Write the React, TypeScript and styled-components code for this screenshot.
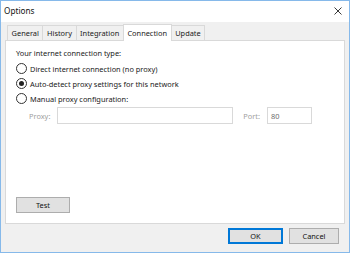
import React from "react";
import styled, { createGlobalStyle } from "styled-components";

const Global = createGlobalStyle`
  html, body { margin: 0; padding: 0; background: #ffffff; }
  * { box-sizing: border-box; }
`;

const Window = styled.div`
  width: 350px;
  height: 253px;
  border: 1px solid #86b9ea;
  display: flex;
  flex-direction: column;
  font-family: "Noto Sans", "Open Sans", sans-serif;
  font-size: 7.4px;
  color: #1a1a1a;
  overflow: hidden;
`;

const TitleBar = styled.div`
  height: 21px;
  background: #ffffff;
  display: flex;
  align-items: center;
  justify-content: space-between;
  padding: 0 7px 2px 3px;
`;

const Title = styled.span`
  font-size: 8.2px;
  color: #111;
`;

const Body = styled.div`
  flex: 1;
  background: #f0f0f0;
  display: flex;
  flex-direction: column;
  padding: 0 4px 0 4px;
`;

const TabRow = styled.div`
  height: 18px;
  display: flex;
  align-items: flex-end;
  padding-left: 2px;
`;

const Tab = styled.div<{ $active?: boolean }>`
  height: ${(p) => (p.$active ? "17px" : "15px")};
  padding: 0 3.6px;
  display: flex;
  align-items: center;
  border: 1px solid #d9d9d9;
  border-bottom: none;
  margin-left: -1px;
  background: ${(p) => (p.$active ? "#ffffff" : "#f0f0f0")};
  margin-bottom: ${(p) => (p.$active ? "-1px" : "0")};
  position: relative;
  z-index: ${(p) => (p.$active ? 1 : 0)};
  &:first-child { margin-left: 0; }
`;

const Panel = styled.div`
  height: 184px;
  background: #ffffff;
  border: 1px solid #d9d9d9;
  padding: 7px 10px 10px 10px;
  display: flex;
  flex-direction: column;
`;

const Heading = styled.div`
  height: 11px;
  line-height: 11px;
  margin-bottom: 3px;
`;

const RadioRow = styled.label`
  height: 13px;
  display: flex;
  align-items: center;
  gap: 3px;
  margin-bottom: 2px;
`;

const RadioCircle = styled.span<{ $checked?: boolean }>`
  width: 11px;
  height: 11px;
  border-radius: 50%;
  border: 1px solid #333;
  background: #fff;
  display: flex;
  align-items: center;
  justify-content: center;
  &::after {
    content: "";
    width: 5px;
    height: 5px;
    border-radius: 50%;
    background: ${(p) => (p.$checked ? "#222" : "transparent")};
  }
`;

const ProxyRow = styled.div`
  display: flex;
  align-items: center;
  padding-left: 13px;
  margin-top: 0;
`;

const DimLabel = styled.span<{ $gap: number }>`
  color: #a0a0a0;
  margin-right: ${(p) => p.$gap}px;
`;

const Field = styled.div<{ $w: number }>`
  width: ${(p) => p.$w}px;
  height: 17px;
  border: 1px solid #d9d9d9;
  background: #fff;
  color: #6d6d6d;
  display: flex;
  align-items: center;
  padding-left: 3px;
`;

const PortLabel = styled(DimLabel)`
  margin-left: 10px;
`;

const Spacer = styled.div`
  flex: 1;
`;

const Button = styled.button<{ $default?: boolean; $w: number }>`
  width: ${(p) => p.$w}px;
  height: 16px;
  font: inherit;
  color: #111;
  background: #e1e1e1;
  border: 1px solid ${(p) => (p.$default ? "#0078d7" : "#adadad")};
  box-shadow: ${(p) => (p.$default ? "inset 0 0 0 1px #0078d7" : "none")};
  padding: 0;
  display: flex;
  align-items: center;
  justify-content: center;
`;

const Footer = styled.div`
  display: flex;
  justify-content: flex-end;
  gap: 6px;
  padding: 4px 6px 0 0;
`;

export default function App() {
  return (
    <>
      <Global />
      <Window>
        <TitleBar>
          <Title>Options</Title>
          <svg width="8" height="8" viewBox="0 0 8 8">
            <path d="M0.5 0.5 L7.5 7.5 M7.5 0.5 L0.5 7.5" stroke="#222" strokeWidth="0.9" />
          </svg>
        </TitleBar>
        <Body>
          <TabRow>
            <Tab>General</Tab>
            <Tab>History</Tab>
            <Tab>Integration</Tab>
            <Tab $active>Connection</Tab>
            <Tab>Update</Tab>
          </TabRow>
          <Panel>
            <Heading>Your internet connection type:</Heading>
            <RadioRow>
              <RadioCircle />
              Direct internet connection (no proxy)
            </RadioRow>
            <RadioRow>
              <RadioCircle $checked />
              Auto-detect proxy settings for this network
            </RadioRow>
            <RadioRow>
              <RadioCircle />
              Manual proxy configuration:
            </RadioRow>
            <ProxyRow>
              <DimLabel $gap={7}>Proxy:</DimLabel>
              <Field $w={176} />
              <PortLabel $gap={7}>Port:</PortLabel>
              <Field $w={45}>80</Field>
            </ProxyRow>
            <Spacer />
            <Button $w={54}>Test</Button>
          </Panel>
          <Footer>
            <Button $w={55} $default>OK</Button>
            <Button $w={50}>Cancel</Button>
          </Footer>
        </Body>
      </Window>
    </>
  );
}
